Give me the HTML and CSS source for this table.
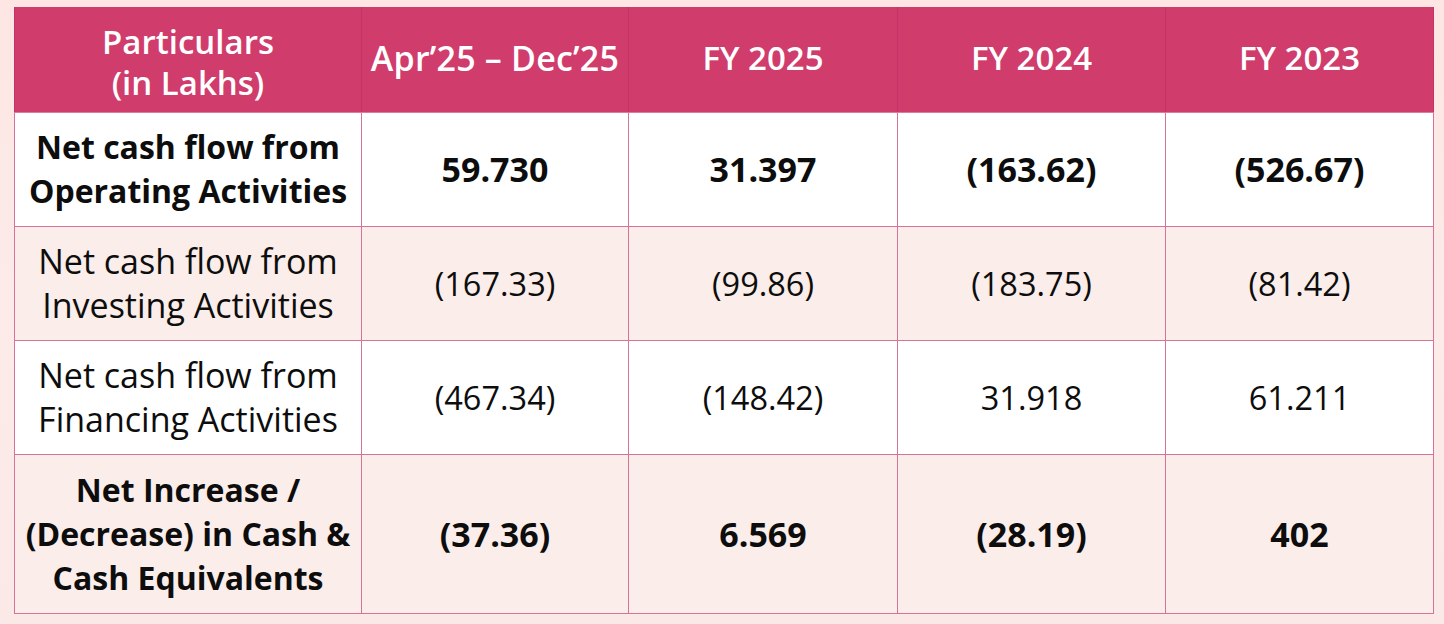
FILE: index.html
```html
<!DOCTYPE html>
<html lang="en">
<head>
<meta charset="utf-8">
<title>Cash Flow</title>
<link rel="stylesheet" href="styles.css">
</head>
<body>
<div class="page">
  <table class="cf">
    <colgroup>
      <col class="c-first"><col class="c-a"><col class="c-b"><col class="c-c"><col class="c-d">
    </colgroup>
    <thead>
      <tr class="r-head">
        <th class="two">Particulars<br>(in Lakhs)</th>
        <th class="wide">Apr’25 – Dec’25</th>
        <th>FY 2025</th>
        <th>FY 2024</th>
        <th>FY 2023</th>
      </tr>
    </thead>
    <tbody>
      <tr class="r-std r-white bold">
        <td class="lbl">Net cash flow from<br>Operating Activities</td>
        <td>59.730</td><td>31.397</td><td>(163.62)</td><td>(526.67)</td>
      </tr>
      <tr class="r-std r-tint">
        <td class="lbl">Net cash flow from<br>Investing Activities</td>
        <td>(167.33)</td><td>(99.86)</td><td>(183.75)</td><td>(81.42)</td>
      </tr>
      <tr class="r-std r-white">
        <td class="lbl">Net cash flow from<br>Financing Activities</td>
        <td>(467.34)</td><td>(148.42)</td><td>31.918</td><td>61.211</td>
      </tr>
      <tr class="r-tall r-tint bold">
        <td class="lbl">Net Increase /<br>(Decrease) in Cash &amp;<br>Cash Equivalents</td>
        <td>(37.36)</td><td>6.569</td><td>(28.19)</td><td>402</td>
      </tr>
    </tbody>
  </table>
</div>
</body>
</html>
```

FILE: styles.css
```css
html, body {
  margin: 0;
  padding: 0;
}
body {
  background: linear-gradient(180deg, #fde6e3 0%, #fcebe9 50%, #fbe9e8 100%);
  width: 1444px;
  height: 624px;
  overflow: hidden;
  font-family: "Open Sans", "Liberation Sans", sans-serif;
}
.page {
  padding: 7px 0 0 14px;
}
.cf {
  border-collapse: collapse;
  table-layout: fixed;
  width: 1419px;
}
.c-first { width: 347px; }
.c-a { width: 267px; }
.c-b { width: 269px; }
.c-c { width: 268px; }
.c-d { width: 268px; }

.cf th, .cf td {
  padding: 0;
  text-align: center;
  vertical-align: middle;
}
.r-head th {
  background: #d03c6c;
  color: #ffffff;
  font-weight: 600;
  font-size: 33px;
  line-height: 42px;
  height: 105px;
  border-left: 1px solid #c3336a;
  border-right: 1px solid #c3336a;
  border-bottom: 1px solid #dc7a9e;
  padding-bottom: 3px;
  box-sizing: border-box;
}
.r-head th.two {
  padding-top: 5px;
  padding-bottom: 0;
  line-height: 41px;
}
.r-head th.wide {
  font-size: 34px;
  letter-spacing: 0.2px;
}
.cf td {
  border: 1px solid #d6739a;
  color: #0d0d0d;
  font-size: 32.5px;
}
.cf td.lbl {
  font-size: 34px;
  line-height: 44px;
}
.r-std td { height: 114px; box-sizing: border-box; }
.r-tall td { height: 159px; box-sizing: border-box; }
.r-white td { background: #ffffff; }
.r-tint td { background: #fbedea; }
.bold td { font-weight: 700; font-size: 34px; }
.bold td.lbl { font-size: 32px; }
```
